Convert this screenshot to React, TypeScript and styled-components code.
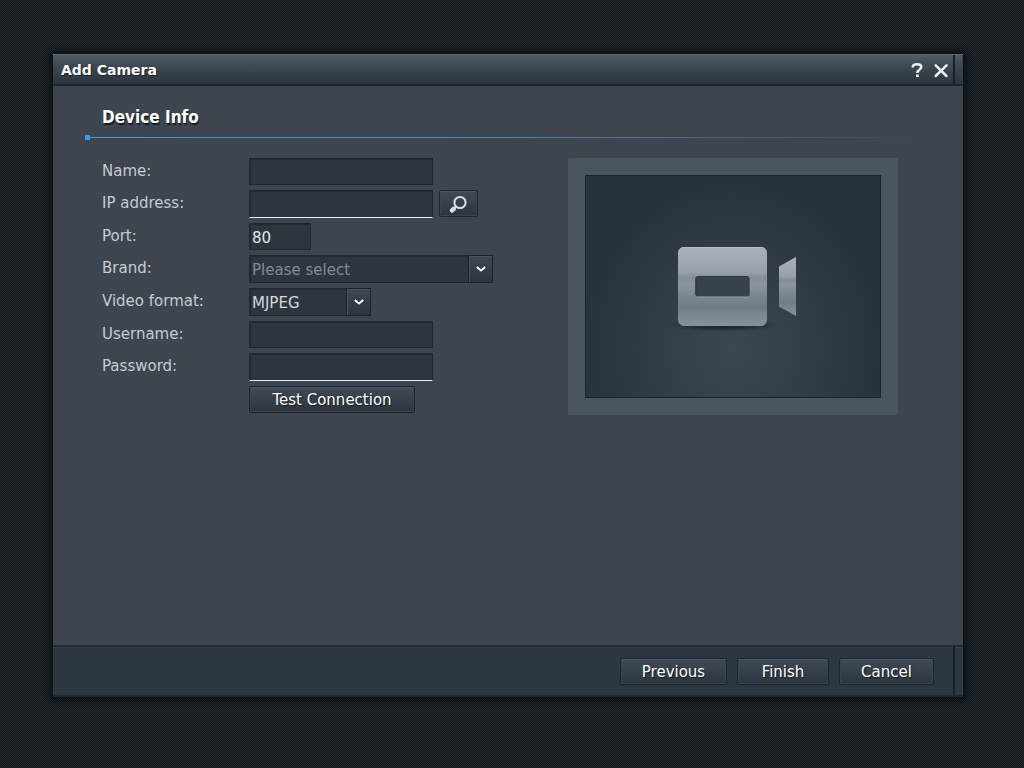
import React from "react";
import styled, { createGlobalStyle, css } from "styled-components";

const uiFont = `Verdana, "DejaVu Sans", sans-serif`;

const GlobalStyle = createGlobalStyle`
  *, *::before, *::after { box-sizing: border-box; }
  body {
    margin: 0;
    font-family: ${uiFont};
    font-size: 15px;
    background-color: #1a1f23;
    background-image: repeating-conic-gradient(#12171a 0 25%, #23282c 0 50%);
    background-size: 2px 2px;
  }
`;

const Page = styled.main`
  min-height: 100vh;
  display: flex;
  padding: 54px 61px 71px 53px;
`;

const Dialog = styled.form`
  flex: 1;
  min-width: 0;
  display: flex;
  flex-direction: column;
  background: #3d464f;
  box-shadow: 0 0 5px 3px rgba(5, 9, 13, 0.65);
`;

const endStrip = css`
  &::after {
    content: "";
    align-self: stretch;
    width: 10px;
    border-left: 2px solid #18212a;
    border-right: 1px solid #34404b;
  }
`;

const TitleBar = styled.header`
  height: 32px;
  display: flex;
  align-items: center;
  padding-left: 8px;
  color: #fff;
  background: linear-gradient(#505b65, #414b54 30%, #2b353e);
  border-top: 1px solid #606b75;
  border-bottom: 2px solid #1e2730;
  ${endStrip}
`;

const Title = styled.h1`
  flex: 1;
  margin: 0;
  font-size: 14px;
  line-height: 16px;
  font-weight: bold;
  text-shadow: 1px 1px 1px #1a222a;
`;

const TitleButton = styled.button`
  width: 24px;
  height: 24px;
  padding: 4px;
  border: 0;
  background: none;
  color: #e9edf2;
  cursor: pointer;
  svg { display: block; }
`;

const Body = styled.div`
  flex: 1;
  padding: 20px 43px 20px 32px;
`;

const SectionTitle = styled.h2`
  margin: 0;
  padding-left: 17px;
  color: #fff;
  font-family: Tahoma, "DejaVu Sans Condensed", "DejaVu Sans", sans-serif;
  font-size: 17px;
  font-stretch: condensed;
  line-height: 22px;
  text-shadow: 1px 2px 1px #151c23;
`;

const Rule = styled.div`
  display: flex;
  align-items: center;
  height: 5px;
  margin: 7px 0 18px;
  &::before {
    content: "";
    width: 5px;
    height: 5px;
    background: #3a97f5;
  }
  &::after {
    content: "";
    flex: 1;
    height: 1px;
    background: linear-gradient(to right, #3a97f5, #4c86bd 50%, #3d464f);
  }
`;

const Columns = styled.div`
  display: flex;
  justify-content: space-between;
  align-items: flex-start;
  padding: 0 22px 0 17px;
`;

const Fields = styled.div`
  display: flex;
  flex-direction: column;
  gap: 5px;
`;

const Row = styled.div`
  display: grid;
  grid-template-columns: 147px auto;
  justify-content: start;
`;

const Label = styled.label`
  color: #c5cbd3;
  line-height: 27px;
`;

const Controls = styled.div`
  display: flex;
  align-items: flex-start;
  gap: 6px;
`;

const fieldBox = css`
  border: 1px solid #1f2831;
  border-radius: 0;
  background: #2d363f;
  box-shadow: inset 1px 1px 1px #222b33;
  font: inherit;
  outline: 0;
`;

const Input = styled.input<{ $width?: number; $required?: boolean }>`
  ${fieldBox}
  width: ${(p) => p.$width ?? 184}px;
  height: ${(p) => (p.$required ? 28 : 27)}px;
  margin: 0;
  padding: 2px 2px 0;
  color: #e2e6ea;
  ${(p) => p.$required && css`border-bottom-color: #f2f0f4;`}
`;

const SelectWrap = styled.div<{ $width: number }>`
  display: grid;
  width: ${(p) => p.$width}px;
  height: 28px;
  > * { grid-area: 1 / 1; }
`;

const Select = styled.select<{ $muted?: boolean }>`
  ${fieldBox}
  appearance: none;
  width: 100%;
  height: 100%;
  padding: 2px 26px 0 2px;
  color: ${(p) => (p.$muted ? "#838c96" : "#d4d9df")};
`;

const Arrow = styled.span`
  justify-self: end;
  width: 25px;
  display: grid;
  place-items: center;
  border: 1px solid #1a232b;
  background: linear-gradient(#3d4852, #2b353e);
  box-shadow: inset 1px 1px 0 #46515b;
  pointer-events: none;
`;

const Button = styled.button<{ $width?: number }>`
  width: ${(p) => p.$width}px;
  height: 27px;
  padding: 1px 0 0;
  display: grid;
  place-items: center;
  border: 1px solid #1d2630;
  border-radius: 2px;
  background: linear-gradient(#414b55, #2c353f);
  box-shadow: inset 0 1px 0 #4b5660, inset 0 0 0 1px #3a444e;
  color: #fff;
  font: inherit;
  line-height: 16px;
  text-shadow: 1px 1px 1px #151c23;
  cursor: pointer;
`;

const Preview = styled.figure`
  margin: 0;
  width: 330px;
  padding: 17px;
  border-radius: 2px;
  background: #4b555f;
`;

const Screen = styled.div`
  height: 223px;
  display: grid;
  place-items: center;
  border: 1px solid #1a242d;
  background: radial-gradient(ellipse 150px 170px at 50% 78%, #3c4750, #323d47 50%, #28323c);
  svg { overflow: visible; }
`;

const Footer = styled.footer`
  height: 52px;
  display: flex;
  align-items: center;
  justify-content: flex-end;
  background: #2d3740;
  border-top: 2px solid #202932;
  border-bottom: 2px solid #1d2833;
  box-shadow: inset 0 1px 0 #36414b;
  ${endStrip}
`;

const Actions = styled.div`
  display: flex;
  gap: 10px;
  margin-right: 19px;
`;

const Chevron = () => (
  <svg width="10" height="6" viewBox="0 0 10 6" aria-hidden="true">
    <path d="M.8 1 5 4.600 9.200 1" fill="none" stroke="#fff" strokeWidth="1.900" />
  </svg>
);

const CameraDrawing = () => (
  <svg width="126" height="92" viewBox="0 0 126 92" role="img" aria-label="Camera">
    <defs>
      <linearGradient id="metal" x1="0" y1="0" x2="0" y2="1">
        <stop offset="0" stopColor="#a9b1ba" />
        <stop offset=".12" stopColor="#a3abb5" />
        <stop offset=".32" stopColor="#98a1ab" />
        <stop offset=".38" stopColor="#858f9a" />
        <stop offset=".48" stopColor="#8b95a0" />
        <stop offset=".62" stopColor="#7c8691" />
        <stop offset=".78" stopColor="#707b87" />
        <stop offset=".84" stopColor="#7b8591" />
        <stop offset="1" stopColor="#87919c" />
      </linearGradient>
      <radialGradient id="shade">
        <stop offset="0" stopColor="#141c24" stopOpacity=".95" />
        <stop offset=".6" stopColor="#18212a" stopOpacity=".55" />
        <stop offset="1" stopColor="#202a34" stopOpacity="0" />
      </radialGradient>
    </defs>
    <ellipse cx="52.5" cy="84" rx="57" ry="7" fill="url(#shade)" />
    <path
      fill="url(#metal)"
      fillRule="evenodd"
      d="M14 6h77a6 6 0 0 1 6 6v67a6 6 0 0 1-6 6H14a6 6 0 0 1-6-6V12a6 6 0 0 1 6-6Z
         M27.500 35.500a2 2 0 0 0-2 2v16a2 2 0 0 0 2 2h50a2 2 0 0 0 2-2v-16a2 2 0 0 0-2-2Z"
    />
    <path d="M9 11a4.500 4.500 0 0 1 5-4.500h77a4.500 4.500 0 0 1 5 4.500" fill="none" stroke="#b6bdc5" />
    <rect x="25.500" y="35.500" width="54" height="20" rx="2" fill="#36424c" />
    <path d="M26 54V37.500a2 2 0 0 1 2-2h50" fill="none" stroke="#2d3842" />
    <path d="M27 56h51" stroke="#949da7" />
    <path d="M109 25.500 126 16v59l-17-9.500Z" fill="url(#metal)" />
  </svg>
);

const SelectField = ({ id, width, muted, option }: {
  id: string; width: number; muted?: boolean; option: string;
}) => (
  <SelectWrap $width={width}>
    <Select id={id} $muted={muted}><option>{option}</option></Select>
    <Arrow><Chevron /></Arrow>
  </SelectWrap>
);

const Field = ({ id, label, children }: { id: string; label: string; children: React.ReactNode }) => (
  <Row>
    <Label htmlFor={id}>{label}</Label>
    <Controls>{children}</Controls>
  </Row>
);

export default function App() {
  return (
    <>
      <GlobalStyle />
      <Page>
        <Dialog role="dialog" aria-labelledby="title" onSubmit={(e) => e.preventDefault()}>
          <TitleBar>
            <Title id="title">Add Camera</Title>
            <TitleButton type="button" aria-label="Help">
              <svg width="16" height="16" viewBox="0 0 16 16" aria-hidden="true">
                <path d="M3.800 5.500V4.800C3.800 2.900 5.700 2.200 8 2.200s4.300.8 4.300 2.900C12.300 7.700 8.400 7.200 8.400 11" fill="none" stroke="currentColor" strokeWidth="2.500" />
                <rect x="7" y="12.500" width="2.800" height="2.500" fill="currentColor" />
              </svg>
            </TitleButton>
            <TitleButton type="button" aria-label="Close">
              <svg width="16" height="16" viewBox="0 0 16 16" aria-hidden="true">
                <path d="m2.700 3.300 10.800 10.700M13.500 3.300 2.700 14" stroke="currentColor" strokeWidth="2.500" strokeLinecap="round" />
              </svg>
            </TitleButton>
          </TitleBar>
          <Body>
            <SectionTitle>Device Info</SectionTitle>
            <Rule />
            <Columns>
              <Fields>
                <Field id="name" label="Name:"><Input id="name" /></Field>
                <Field id="ip" label="IP address:">
                  <Input id="ip" $required />
                  <Button type="button" aria-label="Search" $width={39}>
                    <svg width="19" height="19" viewBox="0 0 19 19" aria-hidden="true">
                      <circle cx="11" cy="7.500" r="5.600" fill="none" stroke="#d9dde6" strokeWidth="2" />
                      <path d="m7 11.500-2 2" stroke="#d9dde6" strokeWidth="2" />
                      <path d="m4.700 13.800-1.700 1.700" stroke="#d9dde6" strokeWidth="4.500" strokeLinecap="round" />
                    </svg>
                  </Button>
                </Field>
                <Field id="port" label="Port:"><Input id="port" defaultValue="80" $width={62} /></Field>
                <Field id="brand" label="Brand:"><SelectField id="brand" width={244} muted option="Please select" /></Field>
                <Field id="format" label="Video format:"><SelectField id="format" width={122} option="MJPEG" /></Field>
                <Field id="username" label="Username:"><Input id="username" /></Field>
                <Field id="password" label="Password:"><Input id="password" type="password" $required /></Field>
                <Row>
                  <span />
                  <Button type="button" $width={166}>Test Connection</Button>
                </Row>
              </Fields>
              <Preview><Screen><CameraDrawing /></Screen></Preview>
            </Columns>
          </Body>
          <Footer>
            <Actions>
              <Button type="button" $width={107}>Previous</Button>
              <Button type="submit" $width={92}>Finish</Button>
              <Button type="button" $width={95}>Cancel</Button>
            </Actions>
          </Footer>
        </Dialog>
      </Page>
    </>
  );
}
